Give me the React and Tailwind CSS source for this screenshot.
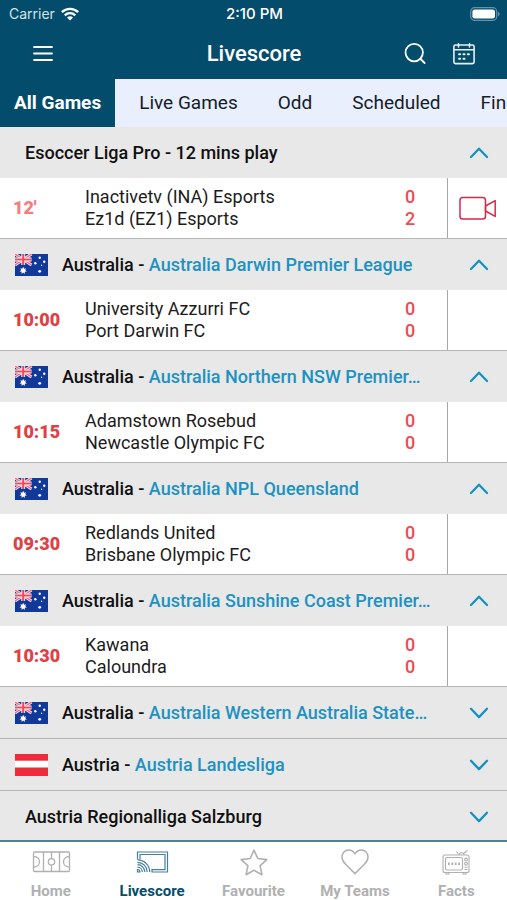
import { useState } from "react";

const TABS = ["All Games", "Live Games", "Odd", "Scheduled", "Finished"];

const LEAGUES = [
    {
        id: 1,
        name: "Esoccer Liga Pro - 12 mins play",
        match: { time: "12'", live: true, home: "Inactivetv (INA) Esports", away: "Ez1d (EZ1) Esports", score: [0, 2] },
    },
    {
        id: 2,
        country: "Australia",
        name: "Australia Darwin Premier League",
        match: { time: "10:00", home: "University Azzurri FC", away: "Port Darwin FC", score: [0, 0] },
    },
    {
        id: 3,
        country: "Australia",
        name: "Australia Northern NSW Premier…",
        match: { time: "10:15", home: "Adamstown Rosebud", away: "Newcastle Olympic FC", score: [0, 0] },
    },
    {
        id: 4,
        country: "Australia",
        name: "Australia NPL Queensland",
        match: { time: "09:30", home: "Redlands United", away: "Brisbane Olympic FC", score: [0, 0] },
    },
    {
        id: 5,
        country: "Australia",
        name: "Australia Sunshine Coast Premier…",
        match: { time: "10:30", home: "Kawana", away: "Caloundra", score: [0, 0] },
    },
    { id: 6, country: "Australia", name: "Australia Western Australia State…" },
    { id: 7, country: "Austria", name: "Austria Landesliga" },
    { id: 8, name: "Austria Regionalliga Salzburg" },
];

const NAV = [
    { label: "Home", Icon: PitchIcon },
    { label: "Livescore", Icon: CastIcon },
    { label: "Favourite", Icon: StarIcon },
    { label: "My Teams", Icon: HeartIcon },
    { label: "Facts", Icon: TvIcon },
];

function WifiIcon() {
    return (
        <svg viewBox="0 0 18 14" className="h-[14px] w-[18px]" fill="none" stroke="white" strokeWidth="2.4">
            <path d="M0.9 5.2a11.5 11.5 0 0 1 16.2 0" />
            <path d="M3.8 8.3a7.4 7.4 0 0 1 10.4 0" />
            <path d="M9 13.6 6 10.6a4.3 4.3 0 0 1 6 0z" fill="white" stroke="none" />
        </svg>
    );
}

function BatteryIcon() {
    return (
        <svg viewBox="0 0 30 14" className="h-[14px] w-[30px]" fill="none">
            <rect x="0.7" y="0.7" width="26" height="12.6" rx="3.8" stroke="white" strokeOpacity="0.4" strokeWidth="1.2" />
            <rect x="2.4" y="2.4" width="22.6" height="9.2" rx="2.4" fill="white" />
            <path d="M28 4.8v4.4c1-.4 1.7-1.2 1.7-2.2s-.7-1.8-1.7-2.2z" fill="white" fillOpacity="0.4" />
        </svg>
    );
}

function MenuIcon() {
    return (
        <svg viewBox="0 0 20 16" className="h-4 w-5" stroke="white" strokeWidth="1.8" strokeLinecap="round">
            <path d="M1 1h18M1 7.5h18M1 14h18" />
        </svg>
    );
}

function SearchIcon() {
    return (
        <svg viewBox="0 0 22 22" className="size-[22px]" fill="none" stroke="white" strokeWidth="1.8" strokeLinecap="round">
            <circle cx="10.2" cy="9.6" r="8.7" />
            <path d="M16.6 16l4 4" />
        </svg>
    );
}

function CalendarIcon() {
    return (
        <svg viewBox="0 0 22 22" className="size-[22px]" fill="none" stroke="#e4f1f6" strokeWidth="1.6" strokeLinecap="round">
            <rect x="0.9" y="2" width="20.2" height="18.6" rx="1.6" />
            <path d="M1 6.8h20M5.5 0.8v3.2M16.5 0.8v3.2" />
            <path d="M6 11.3h1.2M10.4 11.3h1.2M14.8 11.3h1.2M6 15.7h1.2M10.4 15.7h1.2" strokeWidth="1.9" />
        </svg>
    );
}

function Chevron({ open }) {
    return (
        <svg viewBox="0 0 20 12" className="h-3 w-5 shrink-0" fill="none" stroke="#1492c0" strokeWidth="2.3" strokeLinecap="round" strokeLinejoin="round">
            <path d={open ? "M2 10l8-8.3 8 8.3" : "M2 1.8l8 8.3 8-8.3"} />
        </svg>
    );
}

function CameraIcon() {
    return (
        <svg viewBox="0 0 38 24" className="h-6 w-[38px]" fill="none" stroke="#d32a48" strokeWidth="1.5" strokeLinejoin="round">
            <rect x="1" y="1.5" width="25.5" height="21.5" rx="2.8" />
            <path d="M26.5 10l9.7-5.4v15.8l-9.7-5.4z" />
        </svg>
    );
}

function Flag({ country }) {
    if (country === "Austria") {
        return (
            <svg viewBox="0 0 33 22" className="h-[22px] w-[33px] shrink-0" role="img" aria-label="Austria">
                <rect width="33" height="22" fill="#ee2a3b" />
                <rect y="6.7" width="33" height="6.8" fill="white" />
            </svg>
        );
    }
    return (
        <svg viewBox="0 0 33 22" className="h-[22px] w-[33px] shrink-0" role="img" aria-label="Australia">
            <rect width="33" height="22" fill="#10399a" />
            <path d="M0 0l16.5 11M16.5 0L0 11" stroke="#f3dfe8" strokeWidth="3" />
            <path d="M0 0l16.5 11M16.5 0L0 11" stroke="#f0667a" strokeWidth="1.2" />
            <path d="M8.25 0v11M0 5.5h16.5" stroke="white" strokeWidth="3.8" />
            <path d="M8.25 0v11M0 5.5h16.5" stroke="#ee4a5c" strokeWidth="2.2" />
            <g fill="white">
                <path d="M8.2 12.8l.9 1.9 2-.5-.9 1.9 1.6 1.3-2 .4v2.1l-1.6-1.3-1.6 1.3v-2.1l-2-.4 1.6-1.3-.9-1.9 2 .5z" />
                <circle cx="24.7" cy="3.7" r="1.2" />
                <circle cx="20.3" cy="9.2" r="1.2" />
                <circle cx="29.2" cy="7.8" r="1.2" />
                <circle cx="24.7" cy="17.3" r="1.4" />
                <circle cx="26.6" cy="11.3" r="0.7" />
            </g>
        </svg>
    );
}

function PitchIcon() {
    return (
        <svg viewBox="0 0 40 24" className="h-6 w-10" fill="none" stroke="currentColor" strokeWidth="1.3">
            <rect x="2.5" y="2" width="36" height="19.5" rx="1" />
            <path d="M12.5 2v19.5M28.5 2v19.5M20.5 2v6.500M20.5 15v6.5" />
            <circle cx="20.5" cy="11.8" r="3.2" />
            <path d="M2.5 6.5c3.5 0 6 2.3 6 5.3s-2.5 5.3-6 5.3M38.5 6.5c-3.5 0-6 2.3-6 5.3s2.5 5.3 6 5.3" />
        </svg>
    );
}

function CastIcon() {
    return (
        <svg viewBox="0 0 40 24" className="h-6 w-10" fill="none" stroke="#457f9f" strokeWidth="1.2">
            <path d="M5.5 9.5V2h30v20H20v-2.300h13V4.500H8V9.5" />
            <path d="M5.5 9.8c6.8 0 12.2 5.4 12.2 12.2M5.5 12.3c5.4 0 9.7 4.3 9.7 9.7M5.5 14.7c4 0 7.3 3.3 7.3 7.3M5.5 17.2c2.7 0 4.8 2.1 4.8 4.8" />
            <path d="M5.5 19.5a2.5 2.5 0 0 1 2.5 2.5H5.5z" />
        </svg>
    );
}

function StarIcon() {
    return (
        <svg viewBox="0 0 28 27" className="h-[27px] w-7" fill="none" stroke="currentColor" strokeWidth="1.6" strokeLinejoin="round">
            <path d="M14 1.2l3.8 8.3 9 1.1-6.7 6.1 1.8 9L14 21.3l-7.9 4.4 1.8-9-6.7-6.1 9-1.1z" />
        </svg>
    );
}

function HeartIcon() {
    return (
        <svg viewBox="0 0 28 26" className="h-[26px] w-7" fill="none" stroke="currentColor" strokeWidth="1.5" strokeLinejoin="round">
            <path d="M14 5C12.6 2.4 10.4 1 7.7 1 3.9 1 1 4 1 7.900c0 3 1.4 5.1 3.6 7.3L14 24.6l9.4-9.4C25.6 13 27 10.900 27 7.900 27 4 24.1 1 20.3 1 17.6 1 15.4 2.4 14 5z" />
        </svg>
    );
}

function TvIcon() {
    return (
        <svg viewBox="0 0 28 26" className="h-[26px] w-7" fill="none" stroke="currentColor" strokeWidth="1.1">
            <rect x="1" y="6" width="26" height="17.5" rx="2" />
            <rect x="3.5" y="8.5" width="17" height="12.5" rx="1.5" />
            <path d="M16 4.5L14.5 2.5M17 6c0-3 5-3 5 0M21.5 4.5L25.5 1.5M4 23.5v1.5h3v-1.5M21 23.5v1.5h3v-1.5" />
            <circle cx="24" cy="10.5" r="1.4" />
            <circle cx="24" cy="14.7" r="1.4" />
            <path d="M22.5 18.3h3M22.5 20.5h3" />
            <path d="M6 14.8h1.8M9.4 14.8h1.8M12.8 14.8h1.8M16.2 14.8h1.8" strokeWidth="2.6" />
        </svg>
    );
}

function MatchRow({ match }) {
    return (
        <div className="flex h-[60px] items-stretch bg-white">
            <div className={`flex w-[85px] shrink-0 items-center pl-[13px] font-black ${match.live ? "text-[#f67e80]" : "text-[#e04145]"}`}>
                {match.time}
            </div>
            <div className="flex min-w-0 flex-1 flex-col justify-center leading-[22px] text-[#1c1c1c]">
                <span className="truncate">{match.home}</span>
                <span className="truncate">{match.away}</span>
            </div>
            <div className="flex w-[74px] shrink-0 flex-col justify-center text-center font-medium leading-[22px] text-[#ec4c50]">
                <span>{match.score[0]}</span>
                <span>{match.score[1]}</span>
            </div>
            <div className="flex w-[60px] shrink-0 items-center justify-center border-l border-[#a8a8a8]">
                {match.live && (
                    <button aria-label="Watch live">
                        <CameraIcon />
                    </button>
                )}
            </div>
        </div>
    );
}

function League({ league }) {
    const [open, setOpen] = useState(Boolean(league.match));

    return (
        <section className="shrink-0 border-b border-[#b4b4b4]">
            <button
                aria-expanded={open}
                onClick={() => setOpen(!open)}
                className={`flex h-[51px] w-full items-center bg-[#e8e8e8] pr-[18px] text-left font-medium text-[#101010] ${league.country ? "pl-[15px]" : "pl-[25px]"}`}
            >
                {league.country && <Flag country={league.country} />}
                <span className={`min-w-0 flex-1 truncate pr-4 ${league.country ? "pl-[14px]" : ""}`}>
                    {league.country && `${league.country} - `}
                    <span className={league.country ? "text-[#1c92c2]" : ""}>{league.name}</span>
                </span>
                <Chevron open={open} />
            </button>
            {open && league.match && <MatchRow match={league.match} />}
        </section>
    );
}

export default function App() {
    const [tab, setTab] = useState("All Games");
    const [page, setPage] = useState("Livescore");

    return (
        <div className="flex h-screen flex-col overflow-hidden bg-white font-[Roboto,sans-serif] text-lg">
            <header className="shrink-0 bg-[#034c6b] text-white">
                <div className="grid h-7 grid-cols-3 items-center pl-[9px] pr-[7px] font-[Inter,sans-serif] text-sm">
                    <div className="flex items-center gap-[6px] text-[#d5e2e8]">
                        Carrier <WifiIcon />
                    </div>
                    <span className="text-center text-[15px] font-medium">2:10 PM</span>
                    <div className="flex justify-end">
                        <BatteryIcon />
                    </div>
                </div>
                <div className="grid h-[51px] grid-cols-3 items-center pl-[33px] pr-8">
                    <button aria-label="Menu" className="justify-self-start">
                        <MenuIcon />
                    </button>
                    <h1 className="text-center text-[22px] font-medium leading-7">Livescore</h1>
                    <div className="flex justify-end gap-[27px]">
                        <button aria-label="Search">
                            <SearchIcon />
                        </button>
                        <button aria-label="Calendar">
                            <CalendarIcon />
                        </button>
                    </div>
                </div>
            </header>

            <div role="tablist" className="flex h-12 shrink-0 overflow-x-auto bg-[#e9effd] text-[19px] [scrollbar-width:none]">
                {TABS.map((t) => (
                    <button
                        key={t}
                        role="tab"
                        aria-selected={t === tab}
                        onClick={() => setTab(t)}
                        className={`shrink-0 ${t === tab ? "mr-1 bg-[#034c6b] px-[14px] font-bold text-white" : "px-5 text-[#141c28]"}`}
                    >
                        {t}
                    </button>
                ))}
            </div>

            <main className="flex min-h-0 flex-1 flex-col overflow-y-auto [scrollbar-width:none]">
                {LEAGUES.map((league) => (
                    <League key={league.id} league={league} />
                ))}
            </main>

            <nav className="flex h-[60px] shrink-0 border-t-2 border-[#537f9b] bg-white">
                {NAV.map(({ label, Icon }) => (
                    <button
                        key={label}
                        onClick={() => setPage(label)}
                        className={`flex flex-1 flex-col items-center text-[15px] font-bold ${label === page ? "text-[#034c6b]" : "text-[#b0b0b0]"}`}
                    >
                        <span className="flex h-10 items-center">
                            <Icon />
                        </span>
                        <span className="leading-[18px]">{label}</span>
                    </button>
                ))}
            </nav>
        </div>
    );
}
